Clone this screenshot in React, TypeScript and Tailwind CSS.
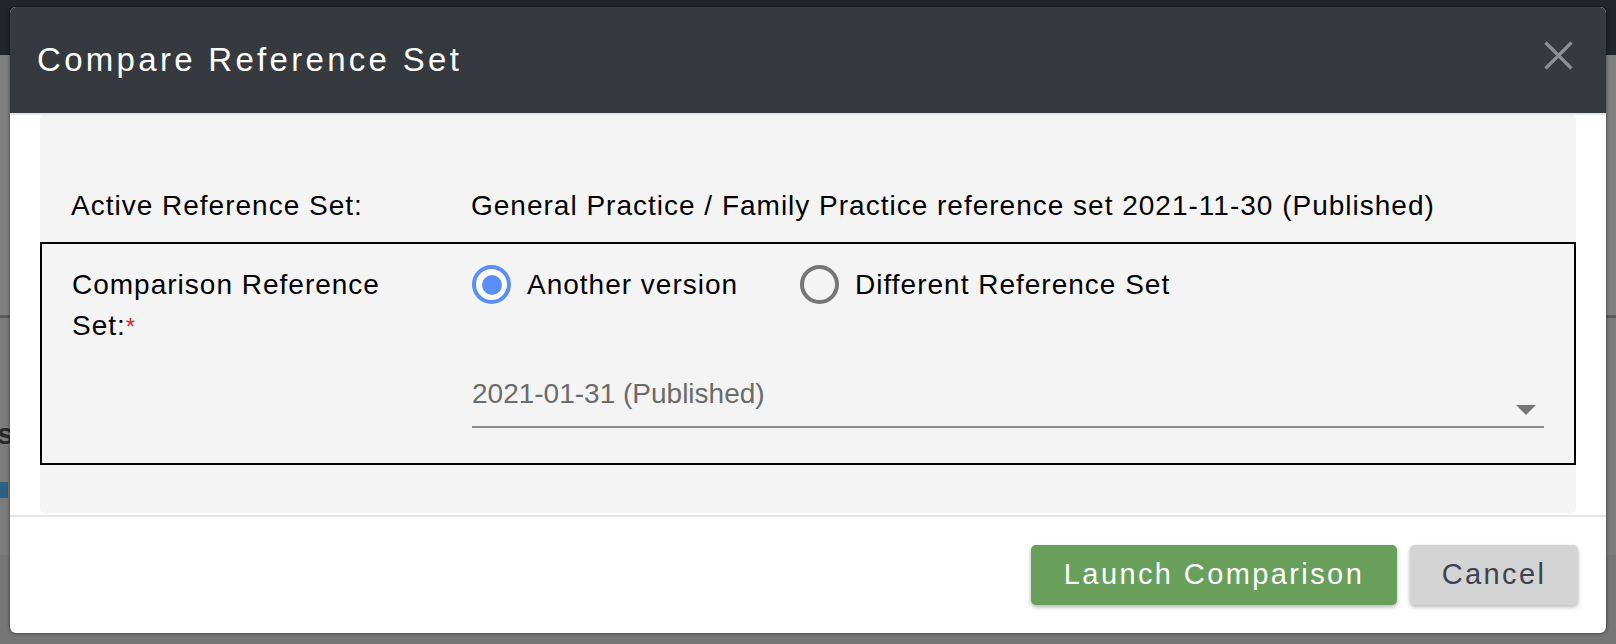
import React from "react"

const font = "font-['Liberation_Sans',Arial,Helvetica,sans-serif]"

function RadioOption({ checked, label }: { checked: boolean; label: string }) {
  return (
    <label className="flex items-center gap-[16px] h-[41px]">
      {checked ? (
        <span className="w-[39px] h-[39px] rounded-full border-[4.5px] border-[#5b8ff7] bg-white flex items-center justify-center">
          <span className="w-[20px] h-[20px] rounded-full bg-[#5b8ff7]" />
        </span>
      ) : (
        <span className="w-[39px] h-[39px] rounded-full border-[4px] border-[#767676] bg-[#f4f4f4]" />
      )}
      <span className="text-[28px] leading-[41px] tracking-[1px] text-black">{label}</span>
    </label>
  )
}

export default function App() {
  return (
    <div className={`relative w-[1616px] h-[644px] overflow-hidden bg-[#767676] ${font}`}>
      {/* page behind the overlay */}
      <div className="flex flex-col h-full">
        <div className="h-[55px] bg-[#222529]" />
        <div className="h-[260px] bg-[#808080]" />
        <div className="h-[3px] bg-[#5c5c5c]" />
        <div className="h-[237px] bg-[#7b7b7b] flex flex-col">
          <div className="mt-[98px] -ml-[3px] text-[30px] leading-[36px] font-bold text-[#2a2a2a]">s</div>
          <div className="mt-[30px] w-[8px] h-[16px] bg-[#2d6083]" />
        </div>
        <div className="flex-1 bg-[#767676]" />
      </div>

      {/* modal */}
      <div className="absolute left-[10px] top-[7px] w-[1596px] h-[626px] bg-white rounded-[6px] shadow-[0_0_3px_1px_rgba(0,0,0,0.35)] flex flex-col overflow-hidden">
        <div className="h-[106px] bg-[#363a3e] flex items-center justify-between pl-[27px] pr-[33px]">
          <h2 className="text-[33px] tracking-[3.3px] text-white font-normal">Compare Reference Set</h2>
          <button className="mb-[9px] w-[29px] h-[29px]">
            <svg width="29" height="29" viewBox="0 0 29 29">
              <path d="M1.5 1.5 L27.5 27.5 M27.5 1.5 L1.5 27.5" stroke="#8d8f92" strokeWidth="3.2" fill="none" />
            </svg>
          </button>
        </div>
        <div className="h-[2px] bg-[#e2e6e9]" />

        <div className="mx-[30px] h-[398px] bg-[#f4f4f4] rounded-b-[6px] rounded-t-[4px] pt-[71px] pb-[48px] flex flex-col">
          <div className="grid grid-cols-[400px_1fr] pl-[31px] text-[28px] leading-[40px] tracking-[1px] text-black">
            <div>Active Reference Set:</div>
            <div>General Practice / Family Practice reference set 2021-11-30 (Published)</div>
          </div>

          <div className="mt-[16px] border-2 border-black grid grid-cols-[400px_1fr] px-[30px] pt-[20px] pb-[35px]">
            <div className="text-[28px] leading-[41px] tracking-[1px] text-black">
              Comparison Reference
              <br />
              Set:<span className="text-[#e3262b] text-[24px] tracking-normal">*</span>
            </div>
            <div className="flex flex-col">
              <div className="flex items-center gap-[62px]">
                <RadioOption checked label="Another version" />
                <RadioOption checked={false} label="Different Reference Set" />
              </div>
              <div className="mt-[69px] flex items-end justify-between border-b-2 border-[#8d8d8d] pb-[12px]">
                <span className="text-[28px] leading-[40px] text-[#6b6b6b]">2021-01-31 (Published)</span>
                <svg width="20" height="10" viewBox="0 0 20 10" className="mr-[8px] -mb-[1px]">
                  <path d="M0 0 L20 0 L10 10 Z" fill="#767676" />
                </svg>
              </div>
            </div>
          </div>
        </div>

        <div className="mt-[2px] h-[2px] bg-[#e2e6e9]" />
        <div className="flex-1 flex items-center justify-end gap-[13px] pr-[28px]">
          <button className="w-[366px] h-[60px] rounded-[5px] bg-[#68a05b] text-white text-[29px] tracking-[2.4px] shadow-[0_2px_4px_rgba(0,0,0,0.3)]">
            Launch Comparison
          </button>
          <button className="w-[168px] h-[60px] rounded-[5px] bg-[#d4d4d4] text-[#3d4350] text-[29px] tracking-[2.4px] shadow-[0_2px_4px_rgba(0,0,0,0.3)]">
            Cancel
          </button>
        </div>
      </div>
    </div>
  )
}
